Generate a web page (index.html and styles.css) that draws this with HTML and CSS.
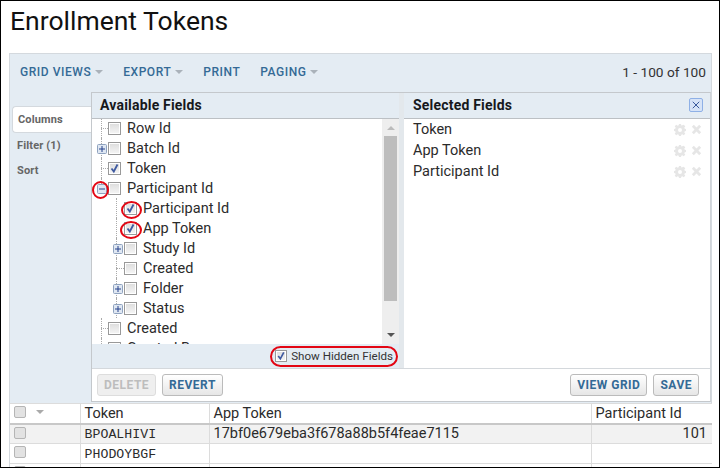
FILE: index.html
```html
<!DOCTYPE html>
<html lang="en">
<head>
<meta charset="utf-8">
<title>Enrollment Tokens</title>
<link rel="stylesheet" href="styles.css">
</head>
<body>
<svg class="defs" width="0" height="0" aria-hidden="true">
  <symbol id="gear" viewBox="0 0 12 12"><path fill="#e6e6e6" fill-rule="evenodd" d="M5 0h2l.3 1.600 1-.4L9.700.7 11.300 2.300l-1 1.400.5 1 1.200.3v2l-1.200.3-.5 1 1 1.400-1.600 1.600-1.400-1-1 .5L7 12H5l-.3-1.200-1-.5-1.400 1L.7 9.700l1-1.400-.5-1L0 7V5l1.200-.3.500-1-1-1.400L2.300.7l1.400 1 1-.5zM6 4a2 2 0 100 4 2 2 0 000-4z"/></symbol>
  <symbol id="cross" viewBox="0 0 12 12"><path stroke="#e6e6e6" stroke-width="3" d="M2 2l8 8M10 2l-8 8"/></symbol>
  <symbol id="tick" viewBox="0 0 13 13"><path fill="none" stroke="#3f5aa0" stroke-width="1.800" d="M3.500 6.500l2.300 3L9.500 2.500"/></symbol>
  <symbol id="plus" viewBox="0 0 10 10"><rect x=".5" y=".5" width="9" height="9" rx="1" fill="#dfe7f2" stroke="#8fa3bf"/><path stroke="#24408a" d="M2 5h6M5 2v6"/></symbol>
  <symbol id="minus" viewBox="0 0 10 10"><rect x=".5" y=".5" width="9" height="9" rx="1" fill="#dfe7f2" stroke="#8fa3bf"/><path stroke="#24408a" d="M2 5h6"/></symbol>
  <symbol id="closex" viewBox="0 0 13 13"><path fill="none" stroke="#2b4d94" d="M3 3l7 7M10 3l-7 7"/></symbol>
</svg>
<main class="page">
  <h1 class="title">Enrollment Tokens</h1>
  <section class="panel">
    <div class="toolbar">
      <span class="tool">GRID VIEWS<i class="caret"></i></span>
      <span class="tool">EXPORT<i class="caret"></i></span>
      <span class="tool">PRINT</span>
      <span class="tool">PAGING<i class="caret"></i></span>
      <span class="count">1 - 100 of 100</span>
    </div>
    <div class="customizer">
      <nav class="tabs">
        <span class="tab tab-active">Columns</span>
        <span class="tab">Filter (1)</span>
        <span class="tab">Sort</span>
      </nav>
      <div class="editor">
        <div class="fields">
          <div class="available">
            <h2 class="head">Available Fields</h2>
            <div class="tree-wrap">
              <ul class="tree">
                <li class="node"><i class="dots"></i><span class="cb"></span><span class="lbl">Row Id</span></li>
                <li class="node"><svg class="exp"><use href="#plus"/></svg><span class="cb"></span><span class="lbl">Batch Id</span></li>
                <li class="node"><i class="dots"></i><span class="cb"><svg class="tick"><use href="#tick"/></svg></span><span class="lbl">Token</span></li>
                <li class="node node-end"><svg class="exp"><use href="#minus"/></svg><span class="cb"></span><span class="lbl">Participant Id</span></li>
                <li class="node sub"><i class="gap"></i><span class="cb"><svg class="tick"><use href="#tick"/></svg></span><span class="lbl">Participant Id</span></li>
                <li class="node sub"><i class="gap"></i><span class="cb"><svg class="tick"><use href="#tick"/></svg></span><span class="lbl">App Token</span></li>
                <li class="node sub"><svg class="exp"><use href="#plus"/></svg><span class="cb"></span><span class="lbl">Study Id</span></li>
                <li class="node sub"><i class="dots"></i><span class="cb"></span><span class="lbl">Created</span></li>
                <li class="node sub"><svg class="exp"><use href="#plus"/></svg><span class="cb"></span><span class="lbl">Folder</span></li>
                <li class="node sub"><svg class="exp"><use href="#plus"/></svg><span class="cb"></span><span class="lbl">Status</span></li>
                <li class="node"><i class="dots"></i><span class="cb"></span><span class="lbl">Created</span></li>
                <li class="node"><i class="dots"></i><span class="cb"></span><span class="lbl">Created By</span></li>
              </ul>
              <div class="scrollbar">
                <i class="arrow arrow-up"></i>
                <i class="thumb"></i>
                <i class="arrow arrow-down"></i>
              </div>
            </div>
            <div class="hidden-row">
              <span class="cb cb-small"><svg class="tick"><use href="#tick"/></svg></span>
              <span class="hidden-label">Show Hidden Fields</span>
            </div>
          </div>
          <div class="selected">
            <h2 class="head head-selected">Selected Fields<span class="close"><svg class="close-x"><use href="#closex"/></svg></span></h2>
            <ul class="picked">
              <li class="pick"><span class="pick-name">Token</span><svg class="gear"><use href="#gear"/></svg><svg class="cross"><use href="#cross"/></svg></li>
              <li class="pick"><span class="pick-name">App Token</span><svg class="gear"><use href="#gear"/></svg><svg class="cross"><use href="#cross"/></svg></li>
              <li class="pick"><span class="pick-name">Participant Id</span><svg class="gear"><use href="#gear"/></svg><svg class="cross"><use href="#cross"/></svg></li>
            </ul>
          </div>
        </div>
        <div class="actions">
          <button class="btn btn-off" type="button">DELETE</button>
          <button class="btn" type="button">REVERT</button>
          <span class="spacer"></span>
          <button class="btn" type="button">VIEW GRID</button>
          <button class="btn" type="button">SAVE</button>
        </div>
      </div>
    </div>
    <table class="grid">
      <colgroup><col class="c-check"><col class="c-token"><col class="c-app"><col class="c-part"></colgroup>
      <thead>
        <tr><th class="check-cell"><span class="row-check"></span><i class="hcaret"></i></th><th>Token</th><th>App Token</th><th>Participant Id</th></tr>
      </thead>
      <tbody>
        <tr class="alt"><td class="check-cell"><span class="row-check"></span></td><td class="mono">BPOALHIVI</td><td>17bf0e679eba3f678a88b5f4feae7115</td><td class="num">101</td></tr>
        <tr><td class="check-cell"><span class="row-check"></span></td><td class="mono">PHODOYBGF</td><td></td><td></td></tr>
        <tr><td class="check-cell"><span class="row-check"></span></td><td></td><td></td><td></td></tr>
      </tbody>
    </table>
  </section>
  <i class="ring ring-exp"></i>
  <i class="ring ring-a"></i>
  <i class="ring ring-b"></i>
  <i class="ring ring-hidden"></i>
</main>
</body>
</html>
```
FILE: styles.css
```css
* { box-sizing: border-box; }
html, body { margin: 0; padding: 0; background: #fff; }
body { width: 720px; height: 468px; overflow: hidden; font-family: Roboto, "Liberation Sans", sans-serif; color: #222; }
.defs { position: absolute; }
.page { position: relative; width: 720px; height: 468px; overflow: hidden; border: 1px solid #000; }
.title { margin: 0; padding: 3px 0 0 9px; height: 52px; font-size: 26.500px; font-weight: 400; line-height: 34px; color: #111; }

.panel { margin: 0 7px 0 8px; border: 1px solid #d4d9de; border-bottom: 0; background: #e4ecf3; height: 420px; }
.toolbar { display: flex; align-items: center; height: 38px; padding: 0 5px 3px 10px; }
.tool { display: flex; align-items: center; margin-right: 20px; font-size: 12px; font-weight: 500; letter-spacing: .55px; color: #346a96; }
.caret { width: 0; height: 0; margin-left: 4px; border: 4px solid transparent; border-top: 4px solid #aab2ba; border-bottom: 0; }
.count { margin-left: auto; font-size: 13.700px; color: #333; }

.customizer { display: flex; height: 310px; }
.tabs { width: 81px; padding-top: 14px; flex: none; }
.tab { display: block; height: 25px; padding-left: 7px; font-size: 11px; font-weight: 700; line-height: 26px; letter-spacing: .15px; color: #666; }
.tab-active { width: 80px; height: 27px; margin-left: 2px; padding-left: 5px; background: #fff; border: 1px solid #d4d9de; border-right: 0; border-radius: 4px 0 0 4px; }
.editor { flex: 1; min-width: 0; background: #fff; border: 1px solid #c4c8cc; border-right-color: #d0d4d8; display: flex; flex-direction: column; }
.fields { display: flex; height: 275px; }
.available { width: 307px; flex: none; display: flex; flex-direction: column; background: #fff; }
.head { margin: 0; height: 26px; padding-left: 8px; background: #e4ecf3; border-bottom: 1px solid #bcc0c4; font-size: 14px; font-weight: 700; line-height: 25px; letter-spacing: .2px; color: #16181c; }
.tree-wrap { position: relative; display: flex; height: 225px; overflow: hidden; }
.tree { flex: 1; margin: -1px 0 0; padding: 0; list-style: none; overflow: hidden; }
.node { position: relative; display: flex; align-items: center; height: 20px; padding-left: 4px; font-size: 14.500px; color: #2b2b2b; }
.node::before { content: ""; position: absolute; left: 9px; top: 0; bottom: 0; border-left: 1px dotted #aaa; }
.node-end::before { bottom: 10px; }
.sub { padding-left: 20px; }
.sub::before { left: 24px; }
.dots { width: 7px; height: 1px; margin-left: 5px; border-top: 1px dotted #aaa; flex: none; }
.sub .dots { width: 8px; margin-left: 4px; }
.gap { width: 12px; flex: none; }
.exp { position: relative; flex: none; width: 10px; height: 10px; margin: 1px 1px 0 1px; }
.cb { position: relative; flex: none; width: 13px; height: 13px; border: 1px solid #999; background: linear-gradient(#dcdcdc, #f6f6f6); box-shadow: inset 0 0 0 1px #fff; }
.lbl { margin-left: 6px; white-space: nowrap; }
.tick { position: absolute; left: -1px; top: -1px; width: 13px; height: 13px; }
.scrollbar { flex: none; width: 17px; display: flex; flex-direction: column; align-items: center; background: #eee; }
.thumb { width: 13px; height: 165px; background: #bdbdbd; }
.arrow { width: 0; height: 0; border: 4px solid transparent; }
.arrow-up { margin-top: 7px; margin-bottom: 6px; border-top: 0; border-bottom: 4px solid #bbb; }
.arrow-down { margin-top: 32px; border-bottom: 0; border-top: 4px solid #555; }
.hidden-row { display: flex; align-items: center; justify-content: flex-end; height: 24px; padding-right: 6px; background: #e4ecf3; }
.cb-small { width: 12px; height: 12px; margin-right: 4px; }
.cb-small .tick { width: 12px; height: 12px; }
.hidden-label { font-size: 11.600px; color: #333; }
.selected { flex: 1; min-width: 0; border-left: 5px solid #e3e8ec; }
.head-selected { position: relative; padding-left: 9px; }
.close { position: absolute; right: 7px; top: 5px; width: 14px; height: 14px; background: #d6e3f7; border: 1px solid #8eb0e6; border-radius: 2px; }
.close-x { display: block; width: 12px; height: 12px; }
.picked { margin: 0; padding: 0 0 0 9px; list-style: none; }
.pick { display: flex; align-items: center; height: 21px; font-size: 14.500px; color: #2b2b2b; }
.pick-name { flex: 1; }
.gear { width: 12px; height: 12px; margin-right: 5px; }
.cross { width: 11px; height: 11px; margin-right: 8px; }
.actions { display: flex; align-items: center; gap: 6px; flex: 1; padding: 0 11px 0 5px; border-top: 1px solid #d4d8dc; }
.spacer { flex: 1; }
.btn { height: 22px; padding: 0 6px; border: 1px solid #bbb; border-radius: 3px; background: linear-gradient(#fff, #e6e6e6); font-family: inherit; font-size: 12px; font-weight: 700; letter-spacing: .5px; color: #346a96; }
.btn-off { color: #bdbdbd; background: #efefef; border-color: #ddd; }

.grid { width: 702px; border-collapse: collapse; table-layout: fixed; background: #fff; margin-top: 1px; }
.c-check { width: 70px; }
.c-token { width: 129px; }
.c-app { width: 382px; }
.grid th, .grid td { height: 20px; padding: 1px 4px 0; border: 1px solid #dcdcdc; font-size: 14.500px; line-height: 16px; font-weight: 400; text-align: left; color: #2b2b2b; white-space: nowrap; overflow: hidden; }
.grid thead th { border-bottom: 2px solid #c8c8c8; }
.grid tr > :first-child { border-left: 0; }
.grid tr > :last-child { border-right: 0; }
.grid .check-cell { padding: 2px 0 0 4px; vertical-align: top; }
.alt td { background: #f2f2f2; }
.grid .mono { font-family: "Liberation Mono", monospace; font-size: 13.200px; letter-spacing: .05px; padding: 2px 0 0 4px; }
.grid .num { text-align: right; padding-right: 5px; }
.row-check { display: inline-block; vertical-align: top; width: 12px; height: 12px; border: 1px solid #b5b5b5; border-radius: 2px; background: #e2e2e2; }
.hcaret { display: inline-block; vertical-align: top; width: 0; height: 0; margin: 4px 0 0 10px; border: 4px solid transparent; border-top: 4px solid #aaa; border-bottom: 0; }
.ring { position: absolute; display: block; border: 2px solid #e30613; border-radius: 50%; }
.ring-exp { left: 91px; top: 180px; width: 17px; height: 18px; }
.ring-a { left: 120px; top: 200px; width: 21px; height: 18px; }
.ring-b { left: 119px; top: 220px; width: 22px; height: 18px; }
.ring-hidden { left: 269px; top: 345px; width: 128px; height: 21px; border-radius: 11px; }
```
